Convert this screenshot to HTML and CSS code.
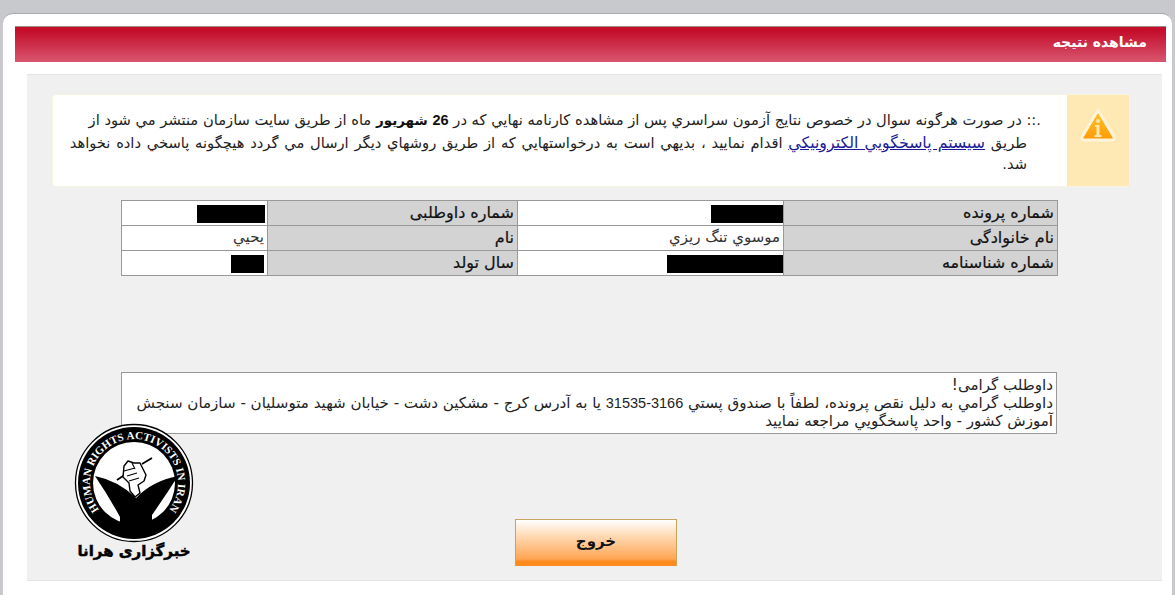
FILE: index.html
```html
<!DOCTYPE html>
<html lang="fa" dir="rtl">
<head>
<meta charset="utf-8">
<title>مشاهده نتیجه</title>
<link rel="stylesheet" href="styles.css">
</head>
<body>
<div class="card">
  <h1 class="title">مشاهده نتیجه</h1>
  <main class="panel">
    <section class="notice">
      <div class="notice-icon">
        <svg width="40" height="38" viewBox="0 0 40 38" aria-hidden="true">
          <defs>
            <linearGradient id="warn" x1="0" y1="0" x2="0" y2="1">
              <stop offset="0" stop-color="#ffc52e"/>
              <stop offset="1" stop-color="#ff9a05"/>
            </linearGradient>
          </defs>
          <path d="M20 3 L36 30 Q37 33 34 33 L6 33 Q3 33 4 30 Z" fill="url(#warn)" stroke="#fff4d8" stroke-width="3" stroke-linejoin="round"/>
          <circle cx="20" cy="14" r="2" fill="#f8e6b0"/>
          <path d="M17 18 h4.500 v10 h2 v2 h-7 v-2 h2 v-8 h-1.500z" fill="#f8e6b0"/>
        </svg>
      </div>
      <p class="notice-text">.:: در صورت هرگونه سوال در خصوص نتايج آزمون سراسري پس از مشاهده كارنامه نهايي كه در <b><span class="num">26</span> شهريور</b> ماه از طريق سايت سازمان منتشر مي شود از<br><span class="stretch">طريق <a href="#">سيستم پاسخگويي الكترونيكي</a> اقدام نماييد ، بديهي است به درخواستهايي كه از طريق روشهاي ديگر ارسال مي گردد هيچگونه پاسخي داده نخواهد</span><br>شد.</p>
    </section>

    <table class="info">
      <colgroup>
        <col class="c1"><col class="c2"><col class="c3"><col class="c4">
      </colgroup>
      <tr>
        <th>شماره پرونده</th><td><span class="mask m1"></span></td>
        <th>شماره داوطلبی</th><td><span class="mask m2"></span></td>
      </tr>
      <tr>
        <th>نام خانوادگی</th><td>موسوي تنگ ريزي</td>
        <th>نام</th><td>يحيي</td>
      </tr>
      <tr>
        <th>شماره شناسنامه</th><td><span class="mask m3"></span></td>
        <th>سال تولد</th><td><span class="mask m4"></span></td>
      </tr>
    </table>

    <div class="message">
      داوطلب گرامی!<br>
      داوطلب گرامي به دليل نقص پرونده، لطفاً با صندوق پستي <span class="num">3166-31535</span> يا به آدرس كرج - مشكين دشت - خيابان شهيد متوسليان - سازمان سنجش<br>آموزش كشور - واحد پاسخگويي مراجعه نماييد
    </div>

    <div class="actions"><button class="exit" type="button">خروج</button></div>

    <div class="logo">
      <svg class="logo-mark" width="120" height="120" viewBox="0 0 120 120" aria-hidden="true">
        <defs>
          <path id="ring" d="M26.300 88.300 A44 44 0 1 1 93.700 88.300"/>
          <clipPath id="disc"><circle cx="60" cy="60" r="50"/></clipPath>
        </defs>
        <circle cx="60" cy="60" r="58.500" fill="#fff" stroke="#000" stroke-width="1.300"/>
        <circle cx="60" cy="60" r="56" fill="#000"/>
        <circle cx="60" cy="60" r="41" fill="#fff"/>
        <text class="logo-ring"><textPath href="#ring" startOffset="50%" text-anchor="middle">HUMAN RIGHTS ACTIVISTS IN IRAN</textPath></text>
        <g clip-path="url(#disc)">
          <path d="M21 53 Q45 58 62 75 Q78 58 104 53 Q92 72 78 92 L78 120 L46 120 L46 94 Q34 72 21 53 Z" fill="#000"/>
        </g>
        <path d="M43 57 L58 47 M68 41 L78 35" fill="none" stroke="#000" stroke-width="1.800"/>
        <path d="M50 43 L54 38 L60 40 L66 40 L69 46 L72 52 L70 58 L64 62 L66 70 L61 74 L56 68 L55 60 L49 54 Z" fill="#fff" stroke="#000" stroke-width="1.400" stroke-linejoin="round"/>
        <path d="M50 48 L61 45 M53 53 L63 50 M55 58 L65 55 M58 40 L61 46" stroke="#000" stroke-width="1.100" fill="none"/>
      </svg>
      <div class="logo-name">خبرگزاری هرانا</div>
    </div>
  </main>
</div>
</body>
</html>
```
FILE: styles.css
```css
* { box-sizing: border-box; }
html { background: #c8c9cc; }
body {
  margin: 0;
  padding: 13px 3px 0;
  height: 595px;
  overflow: hidden;
  font-family: "DejaVu Sans", Tahoma, sans-serif;
  font-size: 12px;
  color: #222;
}
.card {
  height: 582px;
  background: #fff;
  border-top: 1px solid #a9aaad;
  border-radius: 10px 10px 0 0;
  padding: 12px 6px 0 12px;
}
.title {
  margin: 0;
  height: 36px;
  padding: 0 19px;
  background: linear-gradient(#c40e2c 0%, #c40e2c 12%, #d9566e 100%);
  border-top: 1px solid #9c8a7c;
  color: #fff;
  font-size: 14px;
  font-weight: bold;
  line-height: 30px;
}
.panel {
  position: relative;
  height: 507px;
  margin: 12px 4px 0 12px;
  padding: 19px 32px 0 25px;
  background: #f0f0f0;
  border-top: 1px solid #e2e3e3;
  border-bottom: 1px solid #e2e3e3;
}
.notice {
  display: flex;
  height: 93px;
  background: #fff;
  border: 1px solid #f7f4df;
  border-radius: 4px;
}
.notice-icon {
  flex: none;
  width: 62px;
  padding: 12px 0 0 0;
  display: flex;
  justify-content: center;
  align-items: flex-start;
  background: #fee9b4;
}
.notice-text {
  margin: 0;
  padding: 14px 40px 0 0;
  text-indent: -14px;
  font-size: 14.700px;
  line-height: 21.500px;
  color: #222;
  white-space: nowrap;
}
.notice-text b { color: #111; font-size: 13.500px; }
.notice-text a { color: #1a1a9a; text-decoration: underline; font-size: 15.800px; }
.stretch { word-spacing: 1.100px; }
.num { font-family: "Liberation Sans", sans-serif; font-size: 14.500px; }
.info {
  width: 936px;
  margin: 13px 72px 0 0;
  border-collapse: collapse;
  table-layout: fixed;
  background: #fff;
}
.c1 { width: 274px; }
.c2 { width: 266px; }
.c3 { width: 250px; }
.c4 { width: 146px; }
.info th, .info td {
  height: 25px;
  padding: 0 3px 2px 2px;
  border: 1px solid #999;
  text-align: right;
  white-space: nowrap;
  vertical-align: middle;
}
.info th {
  background: #d3d3d3;
  font-size: 16px;
  font-weight: normal;
  color: #111;
  -webkit-text-stroke: 0.200px #111;
}
.info td { font-size: 15px; color: #333; }
.mask { display: block; height: 18px; margin-bottom: -3px; background: #000; }
.m1 { width: 72px; margin-right: -3px; }
.m2 { width: 68px; margin-right: -1px; }
.m3 { width: 116px; margin-right: -3px; }
.m4 { width: 33px; }
.message {
  width: 936px;
  height: 62px;
  margin: 96px 73px 0 0;
  padding: 3px 3px 0 0;
  background: #fff;
  border: 1px solid #999;
  font-size: 15.080px;
  line-height: 18px;
  color: #222;
  white-space: nowrap;
}
.actions {
  margin: 85px 0 0 0;
  padding-right: 453px;
}
.exit {
  display: block;
  width: 162px;
  height: 47px;
  padding: 0 0 4px;
  background: linear-gradient(#fff 0%, #ffe4c8 25%, #ffa552 85%, #ff8a1e 90%);
  border: 1px solid #c9a45e;
  border-bottom: 0;
  font-family: inherit;
  font-size: 15px;
  font-weight: bold;
  color: #111;
}
.logo {
  position: absolute;
  left: 47px;
  top: 348px;
  width: 120px;
  text-align: center;
}
.logo-mark { display: block; direction: ltr; }
.logo-ring {
  font-family: "Liberation Serif", serif;
  font-size: 11px;
  font-weight: bold;
  fill: #fff;
  direction: ltr;
}
.logo-name {
  margin-top: -1px;
  font-size: 15px;
  font-weight: bold;
  color: #000;
  -webkit-text-stroke: 0.500px #000;
  white-space: nowrap;
}
```
